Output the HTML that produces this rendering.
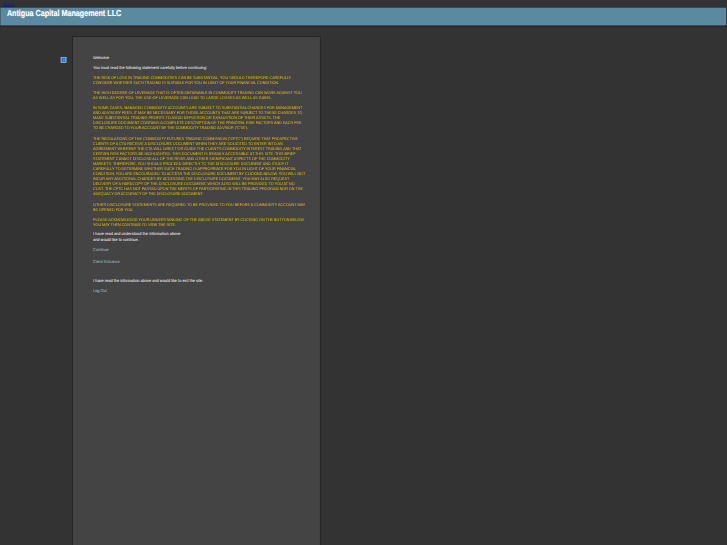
<!DOCTYPE html>
<html lang="en">
<head>
<meta charset="utf-8">
<title>Antigua Capital Management LLC</title>
<style>
html,body{margin:0;padding:0;background:#333333;}
body{width:727px;height:545px;overflow:hidden;position:relative;font-family:"Liberation Sans",Arial,sans-serif;}
#clip{position:absolute;left:0;top:0;width:727px;height:545px;overflow:hidden;}
#stage{position:absolute;left:0;top:0;width:2000px;height:1500px;transform:scale(0.3635);transform-origin:0 0;background:#333333;text-rendering:geometricPrecision;filter:contrast(1);}
#modlink{position:absolute;left:8px;top:8.6px;font-family:"DejaVu Sans","Liberation Sans",sans-serif;font-size:8.9px;line-height:12px;color:#0000dd;text-decoration:underline;}
#hdr{position:absolute;left:0;top:18.6px;width:2000px;height:55.6px;background:#222426;}
#hdr i{position:absolute;display:block;left:1.1px;top:2px;width:1997.1px;height:49.5px;background:#5b8aa0;}
#title{position:absolute;left:18.7px;top:20.9px;font-size:24px;line-height:30px;font-weight:bold;color:#ffffff;white-space:nowrap;transform:scaleX(0.8215);transform-origin:0 0;-webkit-text-stroke:0.45px #ffffff;}
#panel{position:absolute;left:198.3px;top:99.2px;width:678.8px;height:1420px;background:#444444;border:3px solid #282828;}
#icon{position:absolute;left:166.2px;top:156.4px;width:17.4px;height:16.9px;}
.t{position:absolute;left:256px;font-size:11.42px;line-height:14px;color:#ffffff;white-space:nowrap;transform:scaleX(0.9346);transform-origin:0 0;}
.t.y{color:#f0c000;font-size:10.95px;line-height:13.97px;}
.t.y .l{position:absolute;left:0;display:block;}
.t a{color:#a9c4d6;text-decoration:none;}
</style>
</head>
<body>
<div id="clip">
<div id="stage">
  <a id="modlink">Module</a>
  <div id="hdr"><i></i></div>
  <div id="title">Antigua Capital Management LLC</div>
  <div id="panel"></div>
  <svg id="icon" viewBox="0 0 16 16.5"><rect x="0" y="0" width="16" height="16.5" rx="1.5" fill="#a9d1f3"/><rect x="1.6" y="1.6" width="12.8" height="13.3" rx="1" fill="#4598e4"/><rect x="4.6" y="3" width="2.1" height="10.2" rx="1" fill="#1d66bf"/><rect x="8.6" y="7.4" width="2.6" height="5.8" rx="1" fill="#1d66bf"/><rect x="8.6" y="3" width="3.6" height="2.4" rx="1" fill="#2a78cf"/></svg>
  <div class="t" style="top:152px">Welcome</div>
  <div class="t" style="top:180.4px"><span style="letter-spacing:0.045px">You must read the following statement carefully before continuing:</span></div>
  <div class="t y" style="top:207px">
    <span class="l" style="top:1px;letter-spacing:-0.017px">THE RISK OF LOSS IN TRADING COMMODITIES CAN BE SUBSTANTIAL. YOU SHOULD THEREFORE CAREFULLY</span>
    <span class="l" style="top:15px;letter-spacing:-0.058px">CONSIDER WHETHER SUCH TRADING IS SUITABLE FOR YOU IN LIGHT OF YOUR FINANCIAL CONDITION.</span>
    <span class="l" style="top:43px;letter-spacing:0.009px">THE HIGH DEGREE OF LEVERAGE THAT IS OFTEN OBTAINABLE IN COMMODITY TRADING CAN WORK AGAINST YOU</span>
    <span class="l" style="top:56px;letter-spacing:0.076px">AS WELL AS FOR YOU. THE USE OF LEVERAGE CAN LEAD TO LARGE LOSSES AS WELL AS GAINS.</span>
    <span class="l" style="top:84px;letter-spacing:-0.036px">IN SOME CASES, MANAGED COMMODITY ACCOUNTS ARE SUBJECT TO SUBSTANTIAL CHARGES FOR MANAGEMENT</span>
    <span class="l" style="top:98px;letter-spacing:0.032px">AND ADVISORY FEES. IT MAY BE NECESSARY FOR THOSE ACCOUNTS THAT ARE SUBJECT TO THESE CHARGES TO</span>
    <span class="l" style="top:111px;letter-spacing:0.017px">MAKE SUBSTANTIAL TRADING PROFITS TO AVOID DEPLETION OR EXHAUSTION OF THEIR ASSETS. THE</span>
    <span class="l" style="top:125px;letter-spacing:-0.016px">DISCLOSURE DOCUMENT CONTAINS A COMPLETE DESCRIPTION OF THE PRINCIPAL RISK FACTORS AND EACH FEE</span>
    <span class="l" style="top:139px;letter-spacing:-0.029px">TO BE CHARGED TO YOUR ACCOUNT BY THE COMMODITY TRADING ADVISOR ("CTA").</span>
    <span class="l" style="top:169px;letter-spacing:-0.067px">THE REGULATIONS OF THE COMMODITY FUTURES TRADING COMMISSION ("CFTC") REQUIRE THAT PROSPECTIVE</span>
    <span class="l" style="top:183px;letter-spacing:0.024px">CLIENTS OF A CTA RECEIVE A DISCLOSURE DOCUMENT WHEN THEY ARE SOLICITED TO ENTER INTO AN</span>
    <span class="l" style="top:197px;letter-spacing:-0.034px">AGREEMENT WHEREBY THE CTA WILL DIRECT OR GUIDE THE CLIENT'S COMMODITY INTEREST TRADING AND THAT</span>
    <span class="l" style="top:211px;letter-spacing:0.040px">CERTAIN RISK FACTORS BE HIGHLIGHTED. THIS DOCUMENT IS READILY ACCESSIBLE AT THIS SITE. THIS BRIEF</span>
    <span class="l" style="top:224px;letter-spacing:0.007px">STATEMENT CANNOT DISCLOSE ALL OF THE RISKS AND OTHER SIGNIFICANT ASPECTS OF THE COMMODITY</span>
    <span class="l" style="top:238px;letter-spacing:-0.041px">MARKETS. THEREFORE, YOU SHOULD PROCEED DIRECTLY TO THE DISCLOSURE DOCUMENT AND STUDY IT</span>
    <span class="l" style="top:252px;letter-spacing:-0.035px">CAREFULLY TO DETERMINE WHETHER SUCH TRADING IS APPROPRIATE FOR YOU IN LIGHT OF YOUR FINANCIAL</span>
    <span class="l" style="top:266px;letter-spacing:-0.009px">CONDITION. YOU ARE ENCOURAGED TO ACCESS THE DISCLOSURE DOCUMENT BY CLICKING BELOW. YOU WILL NOT</span>
    <span class="l" style="top:279px;letter-spacing:0.024px">INCUR ANY ADDITIONAL CHARGES BY ACCESSING THE DISCLOSURE DOCUMENT. YOU MAY ALSO REQUEST</span>
    <span class="l" style="top:293px;letter-spacing:0.062px">DELIVERY OF A HARDCOPY OF THE DISCLOSURE DOCUMENT, WHICH ALSO WILL BE PROVIDED TO YOU AT NO</span>
    <span class="l" style="top:307px;letter-spacing:-0.006px">COST. THE CFTC HAS NOT PASSED UPON THE MERITS OF PARTICIPATING IN THIS TRADING PROGRAM NOR ON THE</span>
    <span class="l" style="top:321px;letter-spacing:-0.106px">ADEQUACY OR ACCURACY OF THE DISCLOSURE DOCUMENT.</span>
    <span class="l" style="top:351px;letter-spacing:0.013px">OTHER DISCLOSURE STATEMENTS ARE REQUIRED TO BE PROVIDED TO YOU BEFORE A COMMODITY ACCOUNT MAY</span>
    <span class="l" style="top:365px;letter-spacing:-0.035px">BE OPENED FOR YOU.</span>
    <span class="l" style="top:392px;letter-spacing:-0.003px">PLEASE ACKNOWLEDGE YOUR UNDERSTANDING OF THE ABOVE STATEMENT BY CLICKING ON THE BUTTON BELOW.</span>
    <span class="l" style="top:406px;letter-spacing:-0.062px">YOU MAY THEN CONTINUE TO VIEW THE SITE.</span>
  </div>
  <div class="t" style="top:636.5px;line-height:15.27px"><span style="letter-spacing:0.100px">I have read and understood the information above</span><br>and would like to continue.</div>
  <div class="t" style="top:680.8px"><a>Continue</a></div>
  <div class="t" style="top:712.8px"><a>Client Entrance</a></div>
  <div class="t" style="top:764.9px"><span style="letter-spacing:0.036px">I have read the information above and would like to exit the site.</span></div>
  <div class="t" style="top:793.7px"><a>Log Out</a></div>
</div>
</div>
</body>
</html>
